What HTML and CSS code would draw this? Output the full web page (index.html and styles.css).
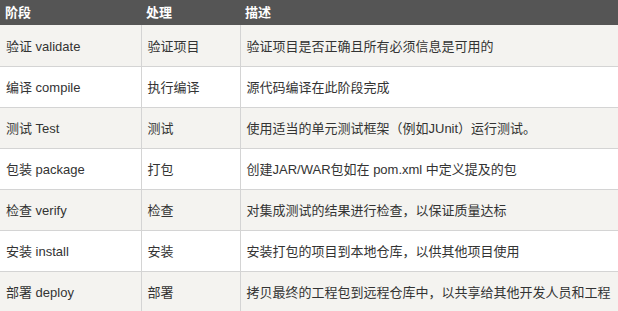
FILE: index.html
```html
<!DOCTYPE html>
<html lang="zh-CN">
<head>
<meta charset="utf-8">
<link rel="stylesheet" href="styles.css">
</head>
<body>
<div class="wrap">
<table class="phases">
  <thead>
    <tr><th class="c1">阶段</th><th class="c2">处理</th><th class="c3">描述</th></tr>
  </thead>
  <tbody>
    <tr><td>验证 validate</td><td>验证项目</td><td>验证项目是否正确且所有必须信息是可用的</td></tr>
    <tr><td>编译 compile</td><td>执行编译</td><td>源代码编译在此阶段完成</td></tr>
    <tr><td>测试 Test</td><td>测试</td><td>使用适当的单元测试框架（例如JUnit）运行测试。</td></tr>
    <tr><td>包装 package</td><td>打包</td><td>创建JAR/WAR包如在 pom.xml 中定义提及的包</td></tr>
    <tr><td>检查 verify</td><td>检查</td><td>对集成测试的结果进行检查，以保证质量达标</td></tr>
    <tr><td>安装 install</td><td>安装</td><td>安装打包的项目到本地仓库，以供其他项目使用</td></tr>
    <tr><td>部署 deploy</td><td>部署</td><td>拷贝最终的工程包到远程仓库中，以共享给其他开发人员和工程</td></tr>
  </tbody>
</table>
</div>
</body>
</html>
```
FILE: styles.css
```css
html, body {
  margin: 0;
  padding: 0;
  background: #fff;
}
.wrap {
  width: 618px;
  height: 311px;
  overflow: hidden;
}
.phases {
  border-collapse: collapse;
  width: 660px;
  table-layout: fixed;
  font-family: "Liberation Sans", "Noto Sans CJK SC", Arial, sans-serif;
  font-size: 13px;
  color: #333;
  white-space: nowrap;
}
.phases .c1 { width: 141px; }
.phases .c2 { width: 99px; }
.phases th {
  background: #555;
  color: #fff;
  font-weight: bold;
  text-align: left;
  height: 25px;
  padding: 0 5px;
  box-sizing: border-box;
  line-height: 25px;
}
.phases td {
  height: 41px;
  box-sizing: border-box;
  padding: 0 6px;
  border-bottom: 1px solid #d4d4d4;
  border-left: 1px solid #d4d4d4;
  vertical-align: middle;
}
.phases td:first-child {
  border-left: none;
}
.phases tbody tr:nth-child(odd) td {
  background: #f4f3f0;
}
```
